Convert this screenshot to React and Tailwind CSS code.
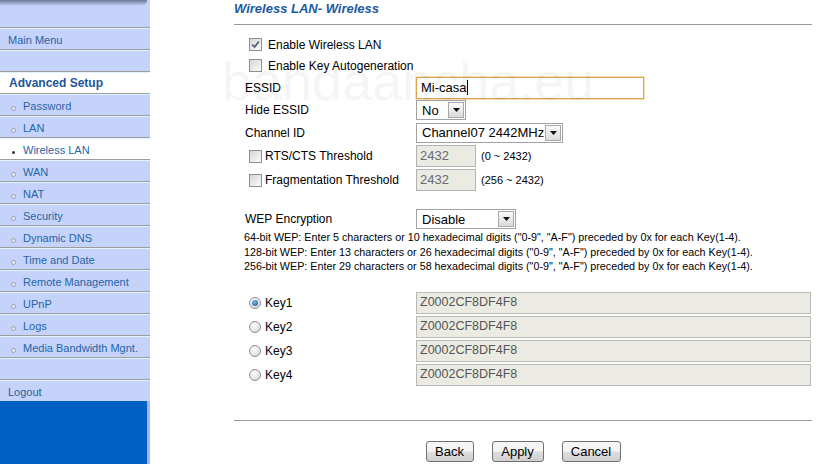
import React from "react";

const menu = [
  "Password",
  "LAN",
  "Wireless LAN",
  "WAN",
  "NAT",
  "Security",
  "Dynamic DNS",
  "Time and Date",
  "Remote Management",
  "UPnP",
  "Logs",
  "Media Bandwidth Mgnt.",
];

function Bullet({ active }) {
  return (
    <span className="w-[5px] h-[5px] mt-[3px] flex items-center justify-center">
      <span
        className={
          active
            ? "w-[3px] h-[3px] rounded-full bg-[#333]"
            : "w-[5px] h-[5px] rounded-full border border-[#9aa0ae] bg-[#e6e8ee]"
        }
      />
    </span>
  );
}

function SideRow({ children, white, className = "pt-[4px]" }) {
  return (
    <div
      className={`h-[22px] border-t border-[#9c9c9c] shadow-[inset_0_1px_0_#e0f3ff] flex items-center ${
        white ? "bg-white" : ""
      } ${className}`}
    >
      {children}
    </div>
  );
}

function Sidebar() {
  return (
    <div className="w-[150px] h-full bg-[#c5d3fb] flex flex-col text-[11px]">
      <div className="h-[27px]">
        <div className="h-[6px] w-[147px] rounded-br-[6px] bg-[linear-gradient(#6c7896,#c5d3fb)]" />
      </div>
      <SideRow className="pt-[4px] pl-[8px] text-[#2a62a0]">Main Menu</SideRow>
      <SideRow />
      <SideRow white className="pt-[1px] pl-[9px] text-[12px] font-bold text-[#1d569b]">
        Advanced Setup
      </SideRow>
      {menu.map((m) => (
        <SideRow key={m} white={m === "Wireless LAN"} className="pt-[4px] pl-[11px] text-[#2465a8]">
          <Bullet active={m === "Wireless LAN"} />
          <span className="ml-[7px]">{m}</span>
        </SideRow>
      ))}
      <SideRow />
      <SideRow className="pt-[4px] pl-[8px] text-[#2a5f98]">Logout</SideRow>
      <div className="flex-1 flex">
        <div className="flex-1 bg-[#0061c2]" />
        <div className="w-[3px] bg-[#a9b5e8]" />
      </div>
    </div>
  );
}

function Check({ checked }) {
  return (
    <span className="shrink-0 inline-flex w-[13px] h-[13px] border border-[#8e8f8f] bg-[linear-gradient(135deg,#d6d6d6,#fbfbfb)] items-center justify-center">
      {checked && (
        <svg viewBox="0 0 9 9" className="w-[9px] h-[9px]">
          <path d="M1.2 4.6 L3.6 7 L7.8 1.6" stroke="#4d5b78" strokeWidth="1.7" fill="none" />
        </svg>
      )}
    </span>
  );
}

function Radio({ checked }) {
  return (
    <span className="shrink-0 w-[12px] h-[12px] rounded-full border border-[#8e8f8f] bg-[radial-gradient(circle_at_40%_35%,#ffffff,#d2d2d2)] flex items-center justify-center">
      {checked && (
        <span className="w-[6px] h-[6px] rounded-full bg-[radial-gradient(circle_at_40%_35%,#7dbbf0,#0b4c8a)]" />
      )}
    </span>
  );
}

function Select({ value, className }) {
  return (
    <div className={`h-[20px] border border-[#a2a2a2] bg-white flex items-center ${className}`}>
      <span className="flex-1 pl-[5px] text-[13px] leading-none text-black">{value}</span>
      <span className="w-[16px] h-[16px] mr-px border border-[#a9a9a9] bg-[linear-gradient(#fbfbfb,#dadada)] flex items-center justify-center">
        <svg viewBox="0 0 7 4" className="w-[7px] h-[4px]">
          <path d="M0 0 H7 L3.5 4 Z" fill="#111" />
        </svg>
      </span>
    </div>
  );
}

function Disabled({ value, className }) {
  return (
    <div className={`h-[22px] border bg-[#ebebe4] flex items-center pl-[3px] ${className}`}>
      {value}
    </div>
  );
}

function Row({ label, h, children }) {
  return (
    <div className={`flex items-center ${h}`}>
      <div className="w-[182px] pl-[11px] text-[12px] text-black">{label}</div>
      {children}
    </div>
  );
}

function CheckLabel({ children }) {
  return (
    <div className="flex items-center pl-[4px] gap-[3px]">
      <Check />
      <span>{children}</span>
    </div>
  );
}

function Button({ children, className }) {
  return (
    <button
      className={`h-[21px] border border-[#707070] rounded-[3px] bg-[linear-gradient(#f5f5f5_45%,#dddddd_55%,#cfcfcf)] text-[13px] leading-none text-black ${className}`}
    >
      {children}
    </button>
  );
}

const keys = ["Key1", "Key2", "Key3", "Key4"];

export default function App() {
  return (
    <div className="relative w-[819px] h-[464px] overflow-hidden bg-white flex font-['Liberation_Sans',Arial,sans-serif]">
      <Sidebar />

      <div className="flex-1">
        <div className="ml-[84px] w-[578px]">
          <div className="h-[25px] border-b border-[#9a9a9a] pt-[1px]">
            <h1 className="text-[13px] leading-[15px] font-bold italic text-[#1c5aa2]">
              Wireless LAN- Wireless
            </h1>
          </div>

          <div className="mt-[9px] text-[12px] text-black">
            <div className="h-[21px] flex items-center pl-[15px] gap-[6px]">
              <Check checked />
              <span className="mt-[1px]">Enable Wireless LAN</span>
            </div>
            <div className="h-[21px] flex items-center pl-[15px] gap-[6px]">
              <Check />
              <span className="mt-[1px]">Enable Key Autogeneration</span>
            </div>

            <Row label="ESSID" h="h-[23px]">
              <div className="w-[228px] h-[22px] border border-[#e0a24a] shadow-[0_0_0_1px_#f6dfb6] flex items-center pl-[4px] text-[13px]">
                Mi-casa
                <span className="w-px h-[15px] bg-black" />
              </div>
            </Row>
            <Row label="Hide ESSID" h="h-[22px]">
              <Select value="No" className="w-[50px]" />
            </Row>
            <Row label="Channel ID" h="h-[23px]">
              <Select value="Channel07 2442MHz" className="w-[147px]" />
            </Row>
            <Row label={<CheckLabel>RTS/CTS Threshold</CheckLabel>} h="h-[24px]">
              <Disabled value="2432" className="w-[60px] border-[#b2b2b2] text-[13px] text-[#6a6a6a]" />
              <span className="ml-[5px] text-[11px]">(0 ~ 2432)</span>
            </Row>
            <Row label={<CheckLabel>Fragmentation Threshold</CheckLabel>} h="h-[24px]">
              <Disabled value="2432" className="w-[60px] border-[#b2b2b2] text-[13px] text-[#6a6a6a]" />
              <span className="ml-[5px] text-[11px]">(256 ~ 2432)</span>
            </Row>

            <div className="mt-[16px]">
              <Row label="WEP Encryption" h="h-[22px]">
                <Select value="Disable" className="w-[100px]" />
              </Row>
            </div>

            <div className="pl-[10px] text-[10.75px] leading-[14.5px]">
              <p>64-bit WEP: Enter 5 characters or 10 hexadecimal digits ("0-9", "A-F") preceded by 0x for each Key(1-4).</p>
              <p>128-bit WEP: Enter 13 characters or 26 hexadecimal digits ("0-9", "A-F") preceded by 0x for each Key(1-4).</p>
              <p>256-bit WEP: Enter 29 characters or 58 hexadecimal digits ("0-9", "A-F") preceded by 0x for each Key(1-4).</p>
            </div>

            <div className="mt-[17px]">
              {keys.map((k, i) => (
                <div key={k} className="h-[24px] flex items-center">
                  <div className="w-[182px] pl-[15px] flex items-center gap-[4px]">
                    <Radio checked={i === 0} />
                    <span>{k}</span>
                  </div>
                  <Disabled
                    value="Z0002CF8DF4F8"
                    className="w-[395px] border-[#b8b8b8] text-[12.5px] text-[#555]"
                  />
                </div>
              ))}
            </div>
          </div>

          <div className="mt-[33px] h-px bg-[#9a9a9a]" />

          <div className="mt-[20px] flex justify-center gap-[18px]">
            <Button className="w-[48px]">Back</Button>
            <Button className="w-[52px]">Apply</Button>
            <Button className="w-[59px]">Cancel</Button>
          </div>
        </div>
      </div>

      <div className="pointer-events-none absolute left-[222px] top-[54px] text-[54px] leading-none text-black/[0.04] select-none">
        bandaancha.eu
      </div>
    </div>
  );
}
